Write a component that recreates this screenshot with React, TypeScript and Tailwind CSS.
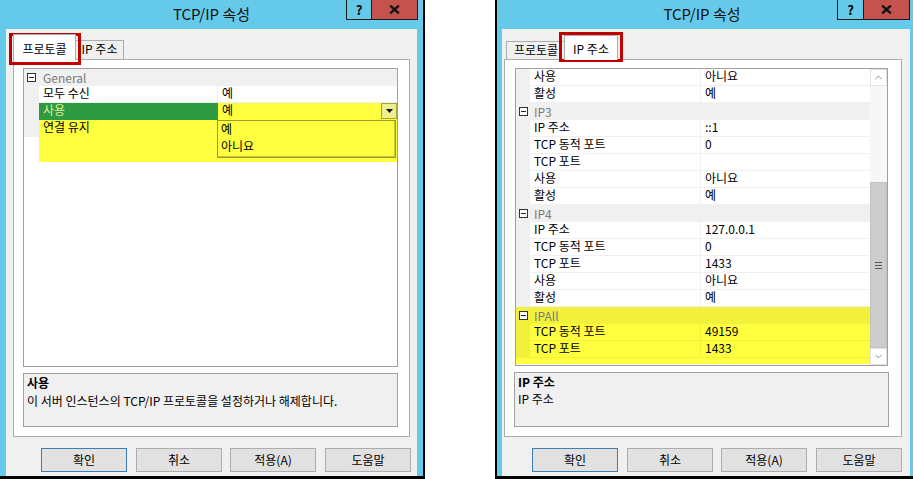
import { ChevronUp, ChevronDown } from "lucide-react";

type Item = { name?: string; value?: string; cat?: string; hl?: boolean };

const rightRows: Item[] = [
  { name: "사용", value: "아니요" },
  { name: "활성", value: "예" },
  { cat: "IP3" },
  { name: "IP 주소", value: "::1" },
  { name: "TCP 동적 포트", value: "0" },
  { name: "TCP 포트", value: "" },
  { name: "사용", value: "아니요" },
  { name: "활성", value: "예" },
  { cat: "IP4" },
  { name: "IP 주소", value: "127.0.0.1" },
  { name: "TCP 동적 포트", value: "0" },
  { name: "TCP 포트", value: "1433" },
  { name: "사용", value: "아니요" },
  { name: "활성", value: "예" },
  { cat: "IPAll", hl: true },
  { name: "TCP 동적 포트", value: "49159", hl: true },
  { name: "TCP 포트", value: "1433", hl: true },
];

function MinusBox() {
  return (
    <span className="flex w-[9px] h-[9px] border border-[#333] bg-white items-center justify-center">
      <span className="w-[5px] h-px bg-[#222]" />
    </span>
  );
}

function CloseIcon() {
  return (
    <svg width="11" height="9" viewBox="0 0 11 9">
      <path d="M1.2 0.6 L9.8 8.4 M9.8 0.6 L1.2 8.4" stroke="#111" strokeWidth="2.4" />
    </svg>
  );
}

function TitleBar({ right }: { right?: boolean }) {
  return (
    <div
      className={
        right
          ? "h-[29px] grid grid-cols-[1fr_auto_1fr] pr-[6px]"
          : "h-[29px] grid grid-cols-[1fr_auto_1fr]"
      }
    >
      <div />
      <div className="text-[15px] leading-[28px] text-[#111] whitespace-nowrap">TCP/IP 속성</div>
      <div
        className={
          right
            ? "flex justify-end items-start -mr-[3px]"
            : "flex justify-end items-start pr-[5px]"
        }
      >
        <div
          className={
            right
              ? "w-[27px] h-[20px] border border-t-0 border-[#1a1a1a] flex items-center justify-center text-[13px] font-bold leading-none"
              : "w-[26px] h-[20px] border border-t-0 border-[#1a1a1a] flex items-center justify-center text-[13px] font-bold leading-none"
          }
        >
          ?
        </div>
        <div className="w-[46px] h-[20px] bg-[#c6524e] border border-t-0 border-l-0 border-[#1a1a1a] flex items-center justify-center">
          <CloseIcon />
        </div>
      </div>
    </div>
  );
}

function GridRow({ item, gutter, nameW }: { item: Item; gutter: string; nameW: string }) {
  if (item.cat) {
    return (
      <div className={`flex h-[17px] items-center ${item.hl ? "bg-[#f1f13b]" : "bg-[#f0f0f0]"}`}>
        <div className={`${gutter} shrink-0 flex justify-center`}>
          <MinusBox />
        </div>
        <div className="pl-[4px] leading-[15px] pb-[1px] text-[#7a7a7a]">{item.cat}</div>
      </div>
    );
  }
  return (
    <div className="flex h-[17px]">
      <div className={`${gutter} shrink-0 ${item.hl ? "bg-[#f1f13b]" : "bg-[#f0f0f0]"}`} />
      <div
        className={`${nameW} shrink-0 pl-[4px] leading-[14px] whitespace-nowrap border-r border-b ${
          item.hl ? "bg-[#ffff40] border-[#f1f13b]" : "bg-white border-[#f0f0f0]"
        }`}
      >
        {item.name}
      </div>
      <div
        className={`flex-1 pl-[4px] leading-[14px] border-b ${
          item.hl ? "bg-[#ffff40] border-[#f1f13b]" : "bg-white border-[#f0f0f0]"
        }`}
      >
        {item.value}
      </div>
    </div>
  );
}

function Buttons() {
  return (
    <>
      <button className="w-[86px] h-[24px] bg-[#e1e1e1] border border-[#3c7fb1]">확인</button>
      <button className="w-[86px] h-[24px] ml-[9px] bg-[#e1e1e1] border border-[#adadad]">취소</button>
      <button className="w-[86px] h-[24px] ml-[8px] bg-[#e1e1e1] border border-[#adadad]">적용(A)</button>
      <button className="w-[86px] h-[24px] ml-[9px] bg-[#e1e1e1] border border-[#adadad]">도움말</button>
    </>
  );
}

function LeftDialog() {
  return (
    <div className="relative w-[425px] h-[479px] shrink-0 border-r-2 border-b-[3px] border-black bg-[#65c9ea] flex flex-col">
      <TitleBar />
      <div className="flex-1 flex pl-[6px] pr-[6px]">
        <div className="flex-1 bg-[#f0f0f0] flex flex-col">
          {/* tabs */}
          <div className="h-[30px] flex items-end pl-[7px]">
            <div className="relative z-10 w-[63px] h-[26px] -mb-px bg-white border border-b-0 border-[#adadad] text-center pt-[6px] leading-[16px]">
              프로토콜
            </div>
            <div className="w-[48px] h-[19px] bg-[#f0f0f0] border border-l-0 border-b-0 border-[#adadad] text-center leading-[16px]">
              IP 주소
            </div>
          </div>
          <div className="ml-[7px] w-[397px] h-[378px] bg-white border border-[#adadad] pt-[8px] pl-[9px]">
            <div className="relative w-[375px] h-[299px] border border-[#a0a0a0] bg-white">
              <GridRow item={{ cat: "General" }} gutter="w-[15px]" nameW="w-[179px]" />
              <GridRow item={{ name: "모두 수신", value: "예" }} gutter="w-[15px]" nameW="w-[179px]" />
              <div className="flex h-[17px]">
                <div className="w-[15px] shrink-0 bg-[#f0f0f0]" />
                <div className="w-[179px] shrink-0 pl-[4px] leading-[14px] bg-[#2e9a44] text-[#e2ee8c]">사용</div>
                <div className="flex-1 flex bg-[#ffff40]">
                  <div className="flex-1 pl-[4px] leading-[14px]">예</div>
                  <div className="w-[16px] h-[16px] border border-[#a4a43c] bg-[#eeee8e] flex items-center justify-center">
                    <svg width="7" height="4" viewBox="0 0 7 4">
                      <path d="M0 0 H7 L3.5 4 Z" fill="#111" />
                    </svg>
                  </div>
                </div>
              </div>
              <div className="flex h-[17px]">
                <div className="w-[15px] shrink-0 bg-[#f0f0f0]" />
                <div className="w-[179px] shrink-0 pl-[4px] leading-[14px] bg-[#ffff40]">연결 유지</div>
                <div className="flex-1 bg-[#ffff40]" />
              </div>
              <div className="ml-[15px] h-[25px] bg-[#ffff40]" />
              {/* open dropdown list */}
              <div className="absolute left-[193px] top-[51px] w-[179px] h-[38px] bg-[#ffff40] border border-[#9c9c2c] shadow-[inset_-1px_-1px_0_#c8c83a]">
                <div className="h-[17px] leading-[16px] pl-[3px]">예</div>
                <div className="h-[17px] leading-[16px] pl-[3px]">아니요</div>
              </div>
            </div>
            <div className="mt-[6px] w-[375px] h-[54px] bg-[#f0f0f0] border border-[#a0a0a0] px-[3px] leading-[18px]">
              <div className="font-bold">사용</div>
              <div>이 서버 인스턴스의 TCP/IP 프로토콜을 설정하거나 해제합니다.</div>
            </div>
          </div>
          <div className="mt-[11px] pl-[35px] flex">
            <Buttons />
          </div>
        </div>
      </div>
      {/* annotation */}
      <div className="absolute left-[9px] top-[33px] w-[72px] h-[32px] border-[3px] border-[#c00000] pointer-events-none" />
    </div>
  );
}

function RightDialog() {
  return (
    <div className="relative w-[418px] h-[479px] shrink-0 border-l-2 border-b-[3px] border-black bg-[#65c9ea] flex flex-col">
      <TitleBar right />
      <div className="flex-1 flex pl-[5px] pr-[3px]">
        <div className="flex-1 bg-[#f0f0f0] flex flex-col">
          <div className="h-[30px] flex items-end pl-[4px]">
            <div className="w-[60px] h-[18px] bg-[#f0f0f0] border border-b-0 border-[#adadad] text-center leading-[16px]">
              프로토콜
            </div>
            <div className="relative z-10 w-[54px] h-[25px] -ml-[2px] -mb-px bg-white border border-b-0 border-[#adadad] text-center pt-[5px] leading-[16px]">
              IP 주소
            </div>
          </div>
          <div className="ml-[2px] w-[398px] h-[378px] bg-white border border-[#adadad] pt-[8px] pl-[10px]">
            <div className="w-[373px] h-[298px] border border-[#a0a0a0] bg-white flex">
              <div className="flex-1 flex flex-col">
                {rightRows.map((r, i) => (
                  <GridRow key={i} item={r} gutter="w-[14px]" nameW="w-[171px]" />
                ))}
                <div className="h-[6px] bg-[#ffff40]" />
              </div>
              <div className="w-[17px] shrink-0 flex flex-col bg-[#f7f7f7]">
                <div className="h-[17px] bg-white border border-[#e3e3e3] flex items-center justify-center">
                  <ChevronUp size={11} strokeWidth={1.5} color="#606060" />
                </div>
                <div className="h-[96px]" />
                <div className="h-[166px] bg-[#cdcdcd] border border-[#c2c2c2] flex flex-col items-center justify-center gap-[2px]">
                  <span className="w-[7px] h-px bg-[#555]" />
                  <span className="w-[7px] h-px bg-[#555]" />
                  <span className="w-[7px] h-px bg-[#555]" />
                </div>
                <div className="flex-1 bg-white border border-[#e3e3e3] flex items-center justify-center">
                  <ChevronDown size={11} strokeWidth={1.5} color="#606060" />
                </div>
              </div>
            </div>
            <div className="mt-[6px] -ml-px w-[375px] h-[55px] bg-[#f0f0f0] border border-[#a0a0a0] px-[3px] leading-[17px]">
              <div className="font-bold">IP 주소</div>
              <div>IP 주소</div>
            </div>
          </div>
          <div className="mt-[11px] pl-[30px] flex">
            <Buttons />
          </div>
        </div>
      </div>
      <div className="absolute left-[62px] top-[32px] w-[64px] h-[30px] border-[3px] border-[#c00000] pointer-events-none" />
    </div>
  );
}

export default function App() {
  return (
    <div className="w-[913px] h-[479px] overflow-hidden bg-white flex text-[12px] text-black font-['Noto_Sans_CJK_KR','Noto_Sans',sans-serif]">
      <LeftDialog />
      <div className="w-[70px] shrink-0" />
      <RightDialog />
    </div>
  );
}
